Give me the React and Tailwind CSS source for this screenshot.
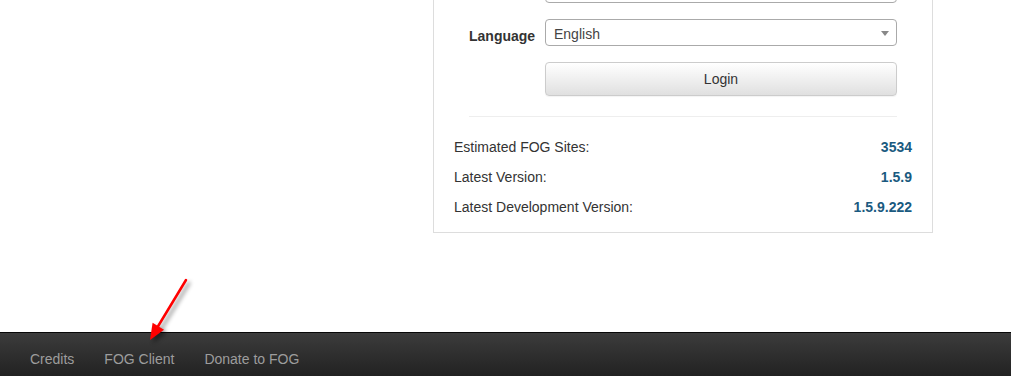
export default function App() {
  return (
    <div className="relative flex h-[376px] w-full flex-col overflow-hidden bg-white font-['Liberation_Sans',Arial,sans-serif] text-[14px] text-[#333]">
      <main className="flex-1">
        <div className="ml-[433px] mt-[-40px] w-[500px] border border-t-0 border-[#ddd] bg-white">
          <div className="pl-[35px] pr-[35px]">
            <div className="flex pt-[16px]">
              <div className="ml-[76px] h-[27px] flex-1 rounded-[4px] border border-[#aaa] bg-white" />
            </div>
            <div className="mt-[16px] flex items-start gap-[10px]">
              <label className="w-[66px] pt-[7px] text-right font-bold leading-[20px]">Language</label>
              <div className="relative flex h-[27px] flex-1 items-center rounded-[4px] border border-[#aaa] bg-white pl-[8px] pt-[3px] text-[#444]">
                English
                <span className="absolute right-[7px] top-[11px] h-0 w-0 border-x-[4px] border-t-[5px] border-x-transparent border-t-[#888]" />
              </div>
            </div>
            <div className="mt-[16px] flex">
              <button className="ml-[76px] h-[34px] flex-1 rounded-[4px] border border-[#ccc] bg-gradient-to-b from-white to-[#e0e0e0] text-[14px] text-[#333] shadow-[0_1px_1px_rgba(0,0,0,0.05)]">
                Login
              </button>
            </div>
            <div className="mt-[20px] border-t border-[#eee]" />
          </div>
          <div className="px-[20px] pb-[10px] pt-[15px]">
            <div className="flex h-[30px] items-center justify-between">
              <span>Estimated FOG Sites:</span>
              <span className="font-bold text-[#1a5a80]">3534</span>
            </div>
            <div className="flex h-[30px] items-center justify-between">
              <span>Latest Version:</span>
              <span className="font-bold text-[#1a5a80]">1.5.9</span>
            </div>
            <div className="flex h-[30px] items-center justify-between">
              <span>Latest Development Version:</span>
              <span className="font-bold text-[#1a5a80]">1.5.9.222</span>
            </div>
          </div>
        </div>
      </main>
      <footer className="h-[44px] border-t border-[#080808] bg-gradient-to-b from-[#3c3c3c] to-[#222]">
        <nav className="flex pl-[15px]">
          <a className="px-[15px] pb-[14px] pt-[16px] leading-[20px] text-[#9d9d9d]">Credits</a>
          <a className="px-[15px] pb-[14px] pt-[16px] leading-[20px] text-[#9d9d9d]">FOG Client</a>
          <a className="px-[15px] pb-[14px] pt-[16px] leading-[20px] text-[#9d9d9d]">Donate to FOG</a>
        </nav>
      </footer>
      <svg
        className="pointer-events-none absolute left-0 top-0"
        width="1011"
        height="376"
        style={{ filter: "drop-shadow(3px 3px 2px rgba(0,0,0,0.45))" }}
      >
        <line x1="186" y1="280" x2="157" y2="328" stroke="#ff0000" strokeWidth="2.5" strokeLinecap="round" />
        <polygon points="150,340 164,329.8 152.6,322.8" fill="#ff0000" />
      </svg>
    </div>
  );
}
